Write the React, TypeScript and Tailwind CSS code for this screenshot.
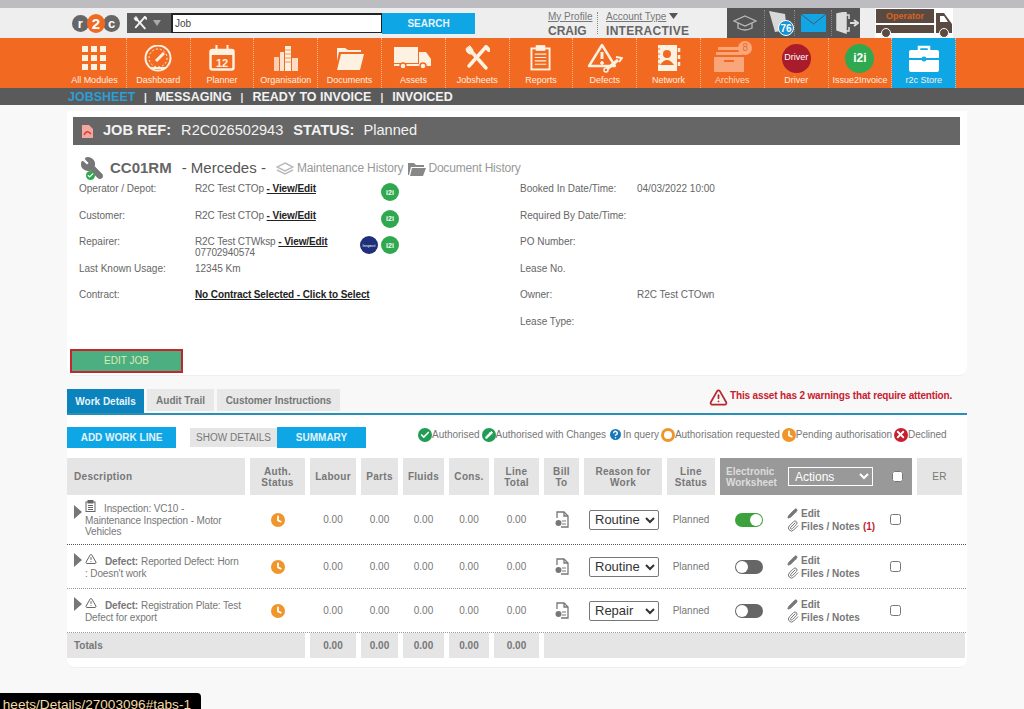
import type { ReactNode } from "react";
import { Check, Paperclip, Pencil, TriangleAlert, Wrench, HelpCircle, X } from "lucide-react";

const CREAM = "#fdf1e2";

function GridIcon() {
    return (
        <svg width="24" height="24" viewBox="0 0 24 24" fill={CREAM}>
            {[0, 9, 18].map(y => [0, 9, 18].map(x => <rect key={`${x}-${y}`} x={x} y={y} width="6" height="6" />))}
        </svg>
    );
}

function GaugeIcon() {
    return (
        <svg width="30" height="27" viewBox="0 0 30 27" fill="none" stroke={CREAM} strokeWidth="2">
            <circle cx="15" cy="13" r="12.5" />
            <circle cx="15" cy="13" r="9" strokeWidth="1" strokeDasharray="2 2" />
            <path d="M13 16 L21 8" strokeWidth="3" />
            <path d="M7 23 H23" strokeWidth="2" />
        </svg>
    );
}

function CalendarIcon() {
    return (
        <svg width="26" height="26" viewBox="0 0 26 26">
            <rect x="1.5" y="5" width="23" height="19.5" rx="2" fill="none" stroke={CREAM} strokeWidth="2.5" />
            <rect x="1.5" y="5" width="23" height="5" fill={CREAM} />
            <path d="M7.5 0 V7 M18.5 0 V7" stroke={CREAM} strokeWidth="2" />
            <text x="13" y="21.5" textAnchor="middle" fontSize="11" fontWeight="700" fill={CREAM} fontFamily="Liberation Sans">12</text>
        </svg>
    );
}

function BuildingsIcon() {
    return (
        <svg width="26" height="25" viewBox="0 0 26 25" fill={CREAM}>
            <rect x="1" y="11" width="5" height="14" opacity=".75" />
            <rect x="7" y="6" width="4" height="19" opacity=".9" />
            <rect x="12" y="0" width="6" height="25" />
            <path d="M12 4 H18 M12 8 H18 M12 12 H18 M12 16 H18" stroke="#f26a21" strokeWidth=".7" />
            <rect x="19" y="12" width="6" height="13" opacity=".85" />
        </svg>
    );
}

function FolderIcon() {
    return (
        <svg width="28" height="23" viewBox="0 0 28 23" fill={CREAM}>
            <path d="M1 1 H9 L12 3 H25 V5 H3 L1 14 Z" />
            <path d="M5 7 H28 L24 23 H1 Z" />
        </svg>
    );
}

function TruckIcon() {
    return (
        <svg width="38" height="23" viewBox="0 0 38 23" fill={CREAM}>
            <rect x="0" y="0" width="24" height="16" />
            <path d="M25 5 H32 L37 12 V18 H25 Z" />
            <rect x="0" y="17" width="37" height="2" />
            <circle cx="9" cy="19" r="3" stroke="#f26a21" strokeWidth="1.5" />
            <circle cx="29" cy="19" r="3" stroke="#f26a21" strokeWidth="1.5" />
        </svg>
    );
}

function ToolsIcon({ color = CREAM, size = 26 }: { color?: string; size?: number }) {
    return (
        <svg width={size} height={size} viewBox="0 0 26 26" fill="none" stroke={color} strokeLinecap="round">
            <path d="M6 5 L22 23" strokeWidth="3.5" />
            <path d="M21 3 L5 21" strokeWidth="3.5" />
            <path d="M2 4 A5 5 0 0 0 8 9 L9 5 L6 1 Z" fill={color} strokeWidth="1" />
            <path d="M22 2 L25 5" strokeWidth="4" />
        </svg>
    );
}

function ClipboardIcon() {
    return (
        <svg width="21" height="26" viewBox="0 0 22 26" fill="none" stroke={CREAM} strokeWidth="2">
            <rect x="1.5" y="3" width="19" height="22" />
            <rect x="7" y="0.5" width="8" height="4" fill={CREAM} />
            <path d="M5 9 H17 M5 12.5 H17 M5 16 H17 M5 19.5 H17" strokeWidth="1.2" />
        </svg>
    );
}

function DefectsIcon() {
    return (
        <svg width="36" height="30" viewBox="0 0 36 30" fill="none" stroke={CREAM}>
            <path d="M15 2 L28 23 H2 Z" strokeWidth="2.4" strokeLinejoin="round" />
            <path d="M15 9 V16" strokeWidth="3" />
            <circle cx="15" cy="20" r="1.4" fill={CREAM} />
            <path d="M20 26 L31 17" strokeWidth="3" />
            <path d="M29 14 L35 15 L32 19" strokeWidth="2" />
            <circle cx="19" cy="27" r="2" strokeWidth="1.5" />
        </svg>
    );
}

function NetworkIcon() {
    return (
        <svg width="26" height="26" viewBox="0 0 26 26" fill={CREAM}>
            <rect x="2" y="0" width="19" height="26" />
            <circle cx="11" cy="9" r="4" fill="#f26a21" />
            <path d="M4 20 Q11 10 18 20 Z" fill="#f26a21" />
            <path d="M23 3 V7 M23 10 V14 M23 17 V21" stroke={CREAM} strokeWidth="2.5" />
            <path d="M0 4 H4 M0 9 H4 M0 14 H4 M0 19 H4" stroke="#f26a21" strokeWidth="1" />
        </svg>
    );
}

function ArchiveIcon() {
    return (
        <div className="relative h-[28px] w-[38px]">
            <svg width="32" height="28" viewBox="0 0 32 28" fill="#f9a77a">
                <rect x="5" y="3" width="22" height="3" />
                <rect x="3" y="8" width="26" height="3" />
                <rect x="1" y="13" width="30" height="15" />
                <rect x="11" y="16" width="10" height="2" fill="#f26a21" />
            </svg>
            <div className="absolute right-[-1px] top-[-3px] h-[14px] w-[14px] rounded-full bg-[#f9a77a] text-center text-[10px] leading-[14px] text-[#f26a21]">8</div>
        </div>
    );
}

function StoreIcon() {
    return (
        <svg width="30" height="27" viewBox="0 0 30 27" fill="#fff">
            <path d="M10 5 V2 H20 V5" fill="none" stroke="#fff" strokeWidth="2.5" />
            <path d="M2 5 H28 A2 2 0 0 1 30 7 V13 H0 V7 A2 2 0 0 1 2 5 Z" />
            <path d="M0 15 H30 V25 A2 2 0 0 1 28 27 H2 A2 2 0 0 1 0 25 Z" />
            <circle cx="15" cy="14" r="2.5" fill="#1aa7e4" />
        </svg>
    );
}

function BillIcon() {
    return (
        <svg width="14" height="17" viewBox="0 0 14 17" fill="none" stroke="#777" strokeWidth="1.3">
            <path d="M2 7 V1 H9 L13 5 V16 H6" />
            <path d="M9 1 V5 H13" />
            <path d="M7 10 H11 M7 13 H11" strokeWidth="1" />
            <circle cx="3.5" cy="12" r="3" fill="#777" stroke="none" />
        </svg>
    );
}

function PendingClock() {
    return (
        <svg width="14" height="14" viewBox="0 0 14 14">
            <circle cx="7" cy="7" r="7" fill="#f0952a" />
            <path d="M7 2.8 V7.4 L10.4 9" fill="none" stroke="#fff" strokeWidth="1.8" />
        </svg>
    );
}

type NavItem = { label: string; icon: ReactNode; store?: boolean };

const navItems: NavItem[] = [
    { label: "All Modules", icon: <GridIcon /> },
    { label: "Dashboard", icon: <GaugeIcon /> },
    { label: "Planner", icon: <CalendarIcon /> },
    { label: "Organisation", icon: <BuildingsIcon /> },
    { label: "Documents", icon: <FolderIcon /> },
    { label: "Assets", icon: <TruckIcon /> },
    { label: "Jobsheets", icon: <ToolsIcon /> },
    { label: "Reports", icon: <ClipboardIcon /> },
    { label: "Defects", icon: <DefectsIcon /> },
    { label: "Network", icon: <NetworkIcon /> },
    { label: "Archives", icon: <ArchiveIcon /> },
    { label: "Driver", icon: <div className="flex h-[29px] w-[29px] items-center justify-center rounded-full bg-[#a81c2c] text-[9px] text-white">Driver</div> },
    { label: "Issue2Invoice", icon: <div className="flex h-[29px] w-[29px] items-center justify-center rounded-full bg-[#2fa84f] text-[12px] font-bold text-white">i2i</div> },
    { label: "r2c Store", icon: <StoreIcon />, store: true },
];

function I2i() {
    return <div className="flex h-[18px] w-[18px] items-center justify-center rounded-full bg-[#2fa84f] text-[7px] font-bold text-white">i2i</div>;
}

function Legend({ icon, children }: { icon: ReactNode; children: string }) {
    return <div className="flex items-center">{icon}<span>{children}</span></div>;
}

function Dot({ color, children }: { color: string; children?: ReactNode }) {
    return <span className="flex h-[14px] w-[14px] items-center justify-center rounded-full text-white" style={{ backgroundColor: color }}>{children}</span>;
}

const gridCols = "grid grid-cols-[178px_55px_46px_37px_41px_40px_45px_35px_78px_48px_192px_45px] gap-x-[5px]";

function HeadCell({ children }: { children: ReactNode }) {
    return <div className="flex items-center justify-center bg-[#e5e5e5] text-center font-bold leading-[11px] tracking-[0.3px]">{children}</div>;
}

function Amount() {
    return <div className="flex items-center justify-center">0.00</div>;
}

function Toggle({ on }: { on?: boolean }) {
    return (
        <div className={`flex h-[14px] w-[28px] items-center rounded-full px-[1px] ${on ? "justify-end bg-[#3ca33c]" : "justify-start bg-[#666]"}`}>
            <div className="h-[12px] w-[12px] rounded-full bg-white" />
        </div>
    );
}

function LineRow({ rowClass, icon, children, reason, toggleOn, notes, arrowTop, textTop }: {
    rowClass: string; icon: ReactNode; children: ReactNode; reason: string; toggleOn?: boolean; notes?: boolean; arrowTop: string; textTop: string;
}) {
    return (
        <div className={`${gridCols} ${rowClass} w-[899px]`}>
            <div className="flex items-start pl-[7px]">
                <svg width="8" height="14" viewBox="0 0 8 14" className={`mr-[3px] shrink-0 ${arrowTop}`} fill="#777"><path d="M0 0 L8 7 L0 14 Z" /></svg>
                <div className={`w-[160px] whitespace-nowrap leading-[11px] tracking-[-0.12px] ${textTop}`}>
                    <span className="relative top-[-3px] mr-[8px] inline-block align-middle">{icon}</span>
                    {children}
                </div>
            </div>
            <div className="flex items-center justify-center"><PendingClock /></div>
            <Amount /><Amount /><Amount /><Amount /><Amount />
            <div className="flex items-center justify-center"><BillIcon /></div>
            <div className="flex items-center justify-start pl-[5px]">
                <select defaultValue={reason} className="h-[20px] w-[70px] rounded-[2px] border border-[#777] bg-white pl-[1px] text-[13px] text-[#333]">
                    <option>Routine</option>
                    <option>Repair</option>
                </select>
            </div>
            <div className="flex items-center justify-center">Planned</div>
            <div className="flex items-center">
                <div className="ml-[15px] w-[52px]"><Toggle on={toggleOn} /></div>
                <div className="w-[103px] font-bold leading-[13px]">
                    <div className="flex items-center"><span className="w-[14px]"><Pencil size={11} color="#777" fill="#777" /></span>Edit</div>
                    <div className="flex items-center"><span className="w-[14px]"><Paperclip size={12} color="#777" /></span>Files / Notes{notes && <span className="ml-[3px] text-[#c01f2f]">(1)</span>}</div>
                </div>
                <input type="checkbox" className="h-[11px] w-[11px]" />
            </div>
            <div />
        </div>
    );
}

export default function App() {
    return (
        <div className="relative h-[709px] w-[1024px] overflow-hidden bg-[#f8f8f8] font-['Liberation_Sans',Arial,sans-serif] text-[10px] text-[#777]">
            <div className="h-[8px] bg-[#bdbdc1]" />

            {/* top header */}
            <div className="flex h-[30px] items-center bg-[#eeeeee]">
                <div className="ml-[72px] flex w-[48px] items-center justify-between">
                    <span className="flex h-[17px] w-[17px] items-center justify-center rounded-full bg-[#666] text-[13px] font-bold leading-none text-white">r</span>
                    <span className="z-10 mx-[-2px] flex h-[19px] w-[19px] items-center justify-center rounded-full bg-[#f26a21] text-[15px] font-bold leading-none text-white">2</span>
                    <span className="flex h-[17px] w-[17px] items-center justify-center rounded-full bg-[#666] text-[13px] font-bold leading-none text-white">c</span>
                </div>
                <div className="ml-[7px] flex h-[20px] w-[44px] items-center bg-[#5a5a5a] pl-[6px]">
                    <ToolsIcon size={14} color="#f2f2f2" />
                    <svg width="8" height="6" viewBox="0 0 8 6" className="ml-[6px]" fill="#aaa"><path d="M0 0 H8 L4 6 Z" /></svg>
                </div>
                <input readOnly value="Job" className="h-[20px] w-[211px] border-2 border-b border-r border-[#222] bg-white pl-[2px] text-[10px] text-[#444]" />
                <div className="flex h-[21px] w-[93px] items-center justify-center bg-[#0fa6e6] font-bold text-[#e4f3fb]">SEARCH</div>

                <div className="ml-[73px] w-[50px] text-[#777]">
                    <div className="underline">My Profile</div>
                    <div className="mt-[1px] text-[12px] font-bold leading-[13px] text-[#666]">CRAIG</div>
                </div>
                <div className="ml-[-1px] h-[22px] border-r border-dotted border-[#888]" />
                <div className="ml-[8px] w-[113px]">
                    <div className="flex items-center">
                        <span className="underline">Account Type</span>
                        <svg width="9" height="6" viewBox="0 0 9 6" className="ml-[3px]" fill="#555"><path d="M0 0 H9 L4.5 6 Z" /></svg>
                    </div>
                    <div className="mt-[1px] text-[12px] font-bold leading-[13px] tracking-[0.3px] text-[#666]">INTERACTIVE</div>
                </div>
                <div className="ml-[8px] flex h-[30px] w-[133px] items-center bg-[#555]">
                    <svg width="24" height="18" viewBox="0 0 24 18" fill="none" stroke="#bbb" strokeWidth="1.3" className="ml-[6px]">
                        <path d="M12 2 L23 7 L12 12 L1 7 Z" /><path d="M5 9 V14 Q12 18 19 14 V9" />
                    </svg>
                    <div className="relative ml-[7px] h-[26px] w-[25px] border-l border-dotted border-[#888] pl-[2px]">
                        <svg width="22" height="24" viewBox="0 0 22 24" fill="#d8d8d8"><path d="M2 1 L18 4 L20 20 L8 22 Z" /></svg>
                        <div className="absolute bottom-[0px] right-[-5px] flex h-[16px] w-[16px] items-center justify-center rounded-full border border-white bg-[#1493d6] text-[10px] font-bold text-white">76</div>
                    </div>
                    <div className="ml-[5px] h-[26px] border-l border-dotted border-[#888]" />
                    <svg width="25" height="18" viewBox="0 0 25 18" className="ml-[6px]"><rect width="25" height="18" fill="#12a5e5" /><path d="M0 0 L12.5 10 L25 0" fill="none" stroke="#555" strokeWidth="1" /></svg>
                    <div className="ml-[5px] h-[26px] border-l border-dotted border-[#888]" />
                    <svg width="24" height="22" viewBox="0 0 24 22" fill="none" stroke="#ddd" strokeWidth="1.5" className="ml-[3px]">
                        <path d="M2 2 L11 0 V21 L2 18 Z" fill="#ddd" /><path d="M11 3 H14 V7 M14 15 V19 H11" /><path d="M15 11 H21 M19 8 L23 11 L19 14" strokeWidth="2" />
                    </svg>
                </div>
                <div className="ml-[15px] h-[30px] w-[78px] bg-white">
                    <svg width="78" height="30" viewBox="0 0 78 30">
                        <rect x="1" y="1" width="58" height="14" fill="#5a4a42" />
                        <text x="30" y="11" textAnchor="middle" fontSize="9" fontWeight="700" fill="#d9651f" fontFamily="Liberation Sans">Operator</text>
                        <rect x="1" y="17" width="58" height="8" fill="#5a4a42" />
                        <path d="M61 5 H69 L77 16 V25 H61 Z" fill="#5a4a42" />
                        <path d="M65 8 H69 L73 14 H65 Z" fill="#fff" />
                        <circle cx="11" cy="25" r="4.5" fill="#5a4a42" stroke="#fff" />
                        <circle cx="69" cy="25" r="4.5" fill="#5a4a42" stroke="#fff" />
                    </svg>
                </div>
            </div>

            {/* orange module nav */}
            <div className="flex h-[50px] bg-[#f26a21] pl-[63px]">
                {navItems.map(item => (
                    <div key={item.label} className={`flex h-full w-[63.8px] flex-col items-center border-r border-dotted border-[#f8b48c] ${item.store ? "bg-[#0fa6e6]" : ""}`}>
                        <div className="flex h-[35px] items-center justify-center pt-[5px]">{item.icon}</div>
                        <div className={`mt-[2px] whitespace-nowrap text-[9px] leading-[11px] ${item.label === "Archives" ? "text-[#fcdcc6]" : "text-[#fdeee0]"}`}>{item.label}</div>
                    </div>
                ))}
            </div>

            {/* sub nav */}
            <div className="flex h-[17px] items-center bg-[#5a5a5a] pl-[68px] pt-[1px] text-[12.5px] font-bold text-[#f2f2f2]">
                <span className="text-[#2a9ed8]">JOBSHEET</span>
                <span className="mx-[8.5px] text-[10px]">|</span>
                <span>MESSAGING</span>
                <span className="mx-[9px] text-[10px]">|</span>
                <span>READY TO INVOICE</span>
                <span className="mx-[9px] text-[10px]">|</span>
                <span>INVOICED</span>
            </div>

            {/* job card */}
            <div className="ml-[67px] mt-[6px] h-[265px] w-[900px] rounded-b-lg border-b border-[#eeeeee] bg-white pl-[6px] pt-[6px]">
                <div className="flex h-[28px] w-[887px] items-center bg-[#666] pl-[9px] text-[14.6px] text-[#f2f2f2]">
                    <svg width="11" height="13" viewBox="0 0 11 13" fill="#f2a8a0" className="mr-[10px]"><path d="M0 0 H7 L11 4 V13 H0 Z" /><path d="M2 10 Q5 4 9 9" fill="none" stroke="#d9382c" strokeWidth="1.5" /></svg>
                    <strong>JOB REF:</strong>
                    <span className="ml-[10px]">R2C026502943</span>
                    <strong className="ml-[10px]">STATUS:</strong>
                    <span className="ml-[9px]">Planned</span>
                </div>

                <div className="mt-[11px] flex h-[24px] items-center pl-[7px]">
                    <div className="relative h-[24px] w-[24px]">
                        <Wrench size={24} color="#777" fill="#777" className="-scale-x-100" />
                        <span className="absolute bottom-[0px] left-[6px] flex h-[9px] w-[9px] items-center justify-center rounded-full bg-[#2fa84f]"><Check size={7} color="#fff" strokeWidth={4} /></span>
                    </div>
                    <span className="ml-[6px] text-[15px] font-bold text-[#666]">CC01RM</span>
                    <span className="ml-[10px] text-[15px] text-[#555]">- Mercedes -</span>
                    <svg width="18" height="14" viewBox="0 0 18 14" fill="none" stroke="#bbb" strokeWidth="1.5" className="ml-[10px] mt-[2px]">
                        <path d="M9 1 L17 5 L9 9 L1 5 Z" /><path d="M1 8 L9 12 L17 8" />
                    </svg>
                    <span className="ml-[3px] text-[12px] tracking-[-0.15px] text-[#999]">Maintenance History</span>
                    <svg width="18" height="14" viewBox="0 0 18 14" fill="#888" className="ml-[5px] mt-[2px]"><path d="M0 1 H6 L8 3 H16 V5 H3 L1 13 H0 Z" /><path d="M4 6 H18 L15 14 H2 Z" /></svg>
                    <span className="ml-[2px] text-[12px] tracking-[-0.2px] text-[#999]">Document History</span>
                </div>

                <div className="mt-[3px] grid grid-cols-[441px_1fr] pl-[6px] leading-[11px] text-[#666]">
                    <div className="grid auto-rows-[26.6px] grid-cols-[116px_165px_1fr]">
                        <div>Operator / Depot:</div>
                        <div className="tracking-[-0.1px]">R2C Test CTOp <a className="font-bold text-[#222] underline">- View/Edit</a></div>
                        <div className="pl-[21px]"><I2i /></div>
                        <div>Customer:</div>
                        <div className="tracking-[-0.1px]">R2C Test CTOp <a className="font-bold text-[#222] underline">- View/Edit</a></div>
                        <div className="pl-[21px]"><I2i /></div>
                        <div>Repairer:</div>
                        <div className="whitespace-nowrap tracking-[-0.1px]">R2C Test CTWksp <a className="font-bold text-[#222] underline">- View/Edit</a><br />07702940574</div>
                        <div className="flex gap-[3px]">
                            <div className="flex h-[18px] w-[18px] items-center justify-center rounded-full bg-[#1f2f7c] text-[4px] text-white">Inspect</div>
                            <I2i />
                        </div>
                        <div>Last Known Usage:</div>
                        <div>12345 Km</div>
                        <div />
                        <div>Contract:</div>
                        <div className="col-span-2"><a className="font-bold tracking-[-0.1px] text-[#222] underline">No Contract Selected - Click to Select</a></div>
                    </div>
                    <div className="grid auto-rows-[26.6px] grid-cols-[117px_1fr]">
                        <div>Booked In Date/Time:</div><div>04/03/2022 10:00</div>
                        <div>Required By Date/Time:</div><div />
                        <div>PO Number:</div><div />
                        <div>Lease No.</div><div />
                        <div>Owner:</div><div>R2C Test CTOwn</div>
                        <div>Lease Type:</div><div />
                    </div>
                </div>

                <div className="ml-[-3px] mt-[6px] flex h-[24px] w-[113px] items-center justify-center border-2 border-[#c5252b] bg-[#4caf82] text-[#dcedb0]">EDIT JOB</div>
            </div>

            {/* tabs */}
            <div className="ml-[67px] mt-[13px] flex h-[26px] w-[900px] items-start gap-[3px] border-b-2 border-[#2a8fb8] font-bold">
                <div className="flex h-[24px] w-[77px] items-center justify-center bg-[#0b83bd] text-[#e8f5fb]">Work Details</div>
                <div className="flex h-[22px] w-[67px] items-center justify-center bg-[#e8e8e8]">Audit Trail</div>
                <div className="flex h-[22px] w-[123px] items-center justify-center bg-[#e8e8e8] tracking-[-0.05px]">Customer Instructions</div>
            </div>
            <div className="absolute left-[709px] top-[388px] flex items-center text-[10px] font-bold tracking-[-0.15px] text-[#c8202f]">
                <TriangleAlert size={19} color="#b8262c" strokeWidth={2.2} />
                <span className="mb-[4px] ml-[2px]">This asset has 2 warnings that require attention.</span>
            </div>

            {/* work lines */}
            <div className="ml-[67px] h-[253px] w-[900px] rounded-b-lg border-b border-[#eeeeee] bg-white">
                <div className="flex h-[43px] items-start pt-[12px]">
                    <div className="flex h-[21px] w-[109px] items-center justify-center bg-[#0fa6e6] font-bold text-[#e4f3fb]">ADD WORK LINE</div>
                    <div className="ml-[14px] mt-[1px] flex h-[19px] w-[87px] items-center justify-center bg-[#e5e5e5]">SHOW DETAILS</div>
                    <div className="flex h-[21px] w-[89px] items-center justify-center bg-[#0fa6e6] font-bold text-[#e4f3fb]">SUMMARY</div>
                    <div className="ml-[52px] flex items-center gap-[2px] whitespace-nowrap tracking-[-0.03px] text-[#777]">
                        <Legend icon={<Dot color="#1f9d55"><Check size={10} strokeWidth={4} /></Dot>}>Authorised</Legend>
                        <Legend icon={<Dot color="#1f9d55"><Pencil size={8} strokeWidth={3} fill="#fff" /></Dot>}>Authorised with Changes</Legend>
                        <Legend icon={<span className="text-[#1677bd]"><HelpCircle size={15} fill="#1677bd" stroke="#fff" strokeWidth={2.4} /></span>}>In query</Legend>
                        <Legend icon={<span className="h-[14px] w-[14px] rounded-full border-[3px] border-[#f0952a]" />}>Authorisation requested</Legend>
                        <Legend icon={<PendingClock />}>Pending authorisation</Legend>
                        <Legend icon={<Dot color="#c8202f"><X size={11} strokeWidth={4} /></Dot>}>Declined</Legend>
                    </div>
                </div>
                <div className={`${gridCols} h-[37px] w-[895px]`}>
                    <div className="flex items-center bg-[#e5e5e5] pl-[7px] font-bold tracking-[0.3px]">Description</div>
                    <HeadCell>Auth.<br />Status</HeadCell>
                    <HeadCell>Labour</HeadCell>
                    <HeadCell>Parts</HeadCell>
                    <HeadCell>Fluids</HeadCell>
                    <HeadCell>Cons.</HeadCell>
                    <HeadCell>Line<br />Total</HeadCell>
                    <HeadCell>Bill<br />To</HeadCell>
                    <HeadCell>Reason for<br />Work</HeadCell>
                    <HeadCell>Line<br />Status</HeadCell>
                    <div className="flex items-center bg-[#999] pl-[6px] font-bold leading-[11px] text-[#ddd]">
                        <div className="w-[62px]">Electronic<br />Worksheet</div>
                        <select className="h-[19px] w-[85px] border border-white bg-transparent pl-[2px] text-[12px] font-normal text-white">
                            <option>Actions</option>
                        </select>
                        <input type="checkbox" className="ml-[19px] h-[11px] w-[11px]" />
                    </div>
                    <HeadCell><span className="font-normal">ER</span></HeadCell>
                </div>

                <LineRow rowClass="h-[50px] border-b border-dotted border-[#555]" arrowTop="mt-[10px]" textTop="pt-[8px]" icon={
                    <svg width="11" height="12" viewBox="0 0 11 12" fill="none" stroke="#666"><rect x="1" y="2" width="9" height="9.5" /><rect x="3" y="0.5" width="5" height="2.5" fill="#666" /><path d="M3 5.5 H8 M3 7.5 H8 M3 9.5 H8" /></svg>
                } reason="Routine" toggleOn notes>
                    Inspection: VC10 -<br />Maintenance Inspection - Motor<br />Vehicles
                </LineRow>
                <LineRow rowClass="h-[44px] border-b border-dotted border-[#999]" arrowTop="mt-[8px]" textTop="pt-[11px]" icon={<TriangleAlert size={12} color="#666" />} reason="Routine">
                    <strong className="mr-[3px]">Defect:</strong>Reported Defect: Horn<br />: Doesn't work
                </LineRow>
                <LineRow rowClass="h-[44px] border-b border-dotted border-[#999]" arrowTop="mt-[8px]" textTop="pt-[11px]" icon={<TriangleAlert size={12} color="#666" />} reason="Repair">
                    <strong className="mr-[3px]">Defect:</strong>Registration Plate: Test<br />Defect for export
                </LineRow>

                <div className={`${gridCols} h-[25px] w-[899px] font-bold`}>
                    <div className="col-span-2 flex items-center bg-[#e5e5e5] pl-[7px]">Totals</div>
                    {["Labour", "Parts", "Fluids", "Cons", "Total"].map(k => (
                        <div key={k} className="flex items-center justify-center bg-[#e5e5e5]">0.00</div>
                    ))}
                    <div className="col-span-5 mr-[-3px] bg-[#e5e5e5]" />
                </div>
            </div>

            {/* browser status tooltip */}
            <div className="absolute bottom-0 left-0 flex h-[16px] w-[201px] justify-end overflow-hidden rounded-tr-[4px] bg-black pr-[10px] pt-[4px] text-[13.6px] leading-[16px] text-[#f3d9a4]">
                <span className="whitespace-nowrap">heets/Details/27003096#tabs-1</span>
            </div>
        </div>
    );
}
